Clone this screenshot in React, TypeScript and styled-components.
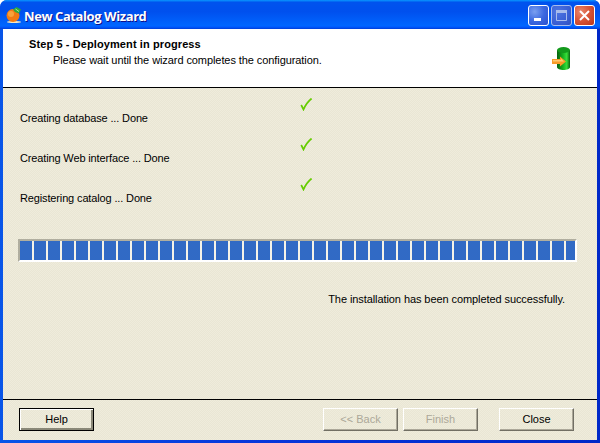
import React from "react";
import styled, { createGlobalStyle } from "styled-components";

const Global = createGlobalStyle`
  html, body { margin: 0; padding: 0; background: #fff; }
  #root { width: 600px; height: 443px; overflow: hidden; }
`;

const Frame = styled.div`
  width: 600px;
  height: 443px;
  box-sizing: border-box;
  display: flex;
  flex-direction: column;
  background: linear-gradient(90deg, #0855e8 0%, #0838dc 40%, #0028c8 100%);
  border-radius: 7px 7px 0 0;
  overflow: hidden;
  font-family: "Liberation Sans", Tahoma, sans-serif;
  font-size: 11px;
  letter-spacing: -0.08px;
  color: #000;
`;

const TitleBar = styled.div`
  height: 29px;
  flex: none;
  display: flex;
  align-items: center;
  padding: 0 5px 0 6px;
  gap: 2px;
  background: linear-gradient(180deg, #0997ff 0%, #0053ee 8%, #0050ee 40%, #0066ff 88%, #005bff 93%, #003dd7 100%);
`;

const Title = styled.div`
  flex: 1;
  margin-top: 3px;
  font-family: "Open Sans", "DejaVu Sans", sans-serif;
  font-weight: 700;
  font-size: 13px;
  letter-spacing: -0.42px;
  color: #fff;
  text-shadow: 1px 1px 0 #0f1089;
  white-space: nowrap;
`;

const WinControls = styled.div`
  display: flex;
  gap: 2px;
  margin-top: 1px;
`;

const WinButton = styled.div<{ $kind: "min" | "max" | "close" }>`
  width: 21px;
  height: 21px;
  box-sizing: border-box;
  border: 1px solid ${(p) => (p.$kind === "max" ? "#a9bcec" : "#fff")};
  border-radius: 3px;
  display: flex;
  align-items: center;
  justify-content: center;
  background: ${(p) =>
    p.$kind === "close"
      ? "radial-gradient(circle at 30% 30%, #e9886c 0%, #d9573a 45%, #b9351a 100%)"
      : p.$kind === "max"
      ? "radial-gradient(circle at 30% 30%, #4f75e2 0%, #3a5fd4 60%, #2f4fbf 100%)"
      : "radial-gradient(circle at 30% 30%, #7a9ff0 0%, #3c69e0 50%, #2a50cf 100%)"};
`;

const Client = styled.div`
  flex: 1;
  min-height: 0;
  margin: 0 3px 3px;
  display: flex;
  flex-direction: column;
  background-color: #ece9d8;
  background-image: conic-gradient(#e9e6d4 25%, #efecdc 0 50%, #e9e6d4 0 75%, #efecdc 0);
  background-size: 2px 2px;
`;

const Header = styled.header`
  height: 58px;
  flex: none;
  box-sizing: border-box;
  background: #fff;
  display: flex;
  justify-content: space-between;
  padding: 8px 27px 0 26px;
`;

const Rule = styled.div`
  height: 1px;
  flex: none;
  background: #000;
`;

const HeadTitle = styled.div`
  font-weight: 700;
  line-height: 14px;
  letter-spacing: 0.1px;
`;

const HeadSub = styled.div`
  line-height: 14px;
  margin-top: 2px;
  margin-left: 24px;
`;

const HeadIcon = styled.div`
  margin-top: 10px;
  width: 18px;
  height: 23px;
`;

const Body = styled.main`
  flex: 1;
  min-height: 0;
  box-sizing: border-box;
  padding: 10px 20px 0 15px;
  display: flex;
  flex-direction: column;
`;

const Steps = styled.div`
  display: flex;
  flex-direction: column;
`;

const StepRow = styled.div`
  height: 40px;
  display: grid;
  grid-template-columns: 282px 13px;
  align-items: start;
`;

const StepText = styled.div`
  margin: 12px 0 0 2px;
  line-height: 16px;
  white-space: nowrap;
  letter-spacing: -0.14px;
`;

const Progress = styled.div`
  margin-top: 21px;
  height: 23px;
  flex: none;
  box-sizing: border-box;
  border: 2px solid #fff;
  border-top-color: #b0ae9f;
  border-left-color: #b0ae9f;
  background: #f5f3e8;
  display: flex;
  gap: 2px;
  overflow: hidden;
`;

const Segment = styled.div`
  flex: none;
  width: 12px;
  height: 100%;
  background: #316ac5;
`;

const Success = styled.div`
  margin-top: 30px;
  text-align: right;
  padding-right: 12px;
  line-height: 14px;
`;

const Footer = styled.footer`
  flex: none;
  height: 40px;
  box-sizing: border-box;
  display: flex;
  align-items: flex-start;
  padding: 8px 23px 0 16px;
`;

const Button = styled.button<{ $primary?: boolean; $gap?: number }>`
  width: 75px;
  height: 23px;
  margin-left: ${(p) => p.$gap ?? 0}px;
  padding: 0 0 2px;
  box-sizing: border-box;
  font: 11px "Liberation Sans", Tahoma, sans-serif;
  color: #000;
  background: transparent;
  border: 1px solid;
  border-color: #fff #716f64 #716f64 #fff;
  box-shadow: inset -1px -1px 0 #aca899;
  &:disabled { color: #aca899; }
  ${(p) =>
    p.$primary
      ? `border-color: #000; box-shadow: inset 1px 1px 0 #fff, inset -2px -2px 0 #8a8878;`
      : ""}
`;

const Spacer = styled.div`
  flex: 1;
`;

const Orange = () => (
  <svg width="16" height="16" viewBox="0 0 16 16">
    <ellipse cx="8" cy="15" rx="7" ry="1" fill="#f8e8c0" />
    <circle cx="7" cy="8.5" r="6.5" fill="#f27a12" />
    <circle cx="5" cy="7" r="3" fill="#f9a23a" />
    <path d="M7 2.5 L10.5 0 L15 2.5 L13 6.5 L9 5 Z" fill="#2fa83a" />
    <path d="M9.5 2 L13 4.5" stroke="#a8e8a0" strokeWidth="1" />
  </svg>
);

const Db = () => (
  <svg width="18" height="23" viewBox="0 0 18 23" style={{ display: "block" }}>
    <defs>
      <linearGradient id="cyl" x1="0" x2="1" y1="0" y2="0">
        <stop offset="0" stopColor="#07610f" />
        <stop offset="0.45" stopColor="#16b020" />
        <stop offset="0.75" stopColor="#38de3a" />
        <stop offset="1" stopColor="#07610f" />
      </linearGradient>
    </defs>
    <path d="M5 3 V20 C5 24 18 24 18 20 V3 Z" fill="url(#cyl)" />
    <ellipse cx="11.5" cy="3" rx="6.5" ry="3" fill="#139a1c" />
    <path d="M0 12 H8 V9.5 L14 14.5 L8 19.5 V17 H0 Z" fill="#f79a28" />
    <path d="M1 13 H9 V11.5 L12 14.5 H1 Z" fill="#ffc870" />
  </svg>
);

const Check = () => (
  <svg width="13" height="13" viewBox="0 0 13 13" style={{ display: "block" }}>
    <path d="M1.2 7 L3.5 11.5 C5 8 7.8 3.5 11.6 0.5" fill="none" stroke="#66cc00" strokeWidth="1.7" />
  </svg>
);

const steps = ["Creating database ... Done", "Creating Web interface ... Done", "Registering catalog ... Done"];

export default function App() {
  return (
    <>
      <Global />
      <Frame>
        <TitleBar>
          <Orange />
          <Title>New Catalog Wizard</Title>
          <WinControls>
            <WinButton $kind="min">
              <svg width="13" height="13" viewBox="0 0 13 13"><rect x="2" y="9" width="7" height="3" fill="#fff" /></svg>
            </WinButton>
            <WinButton $kind="max">
              <svg width="13" height="13" viewBox="0 0 13 13"><path d="M1.5 3.5 H11.5 V11.5 H1.5 Z" fill="none" stroke="#a9bcec" /><rect x="1" y="1" width="11" height="3" fill="#a9bcec" /></svg>
            </WinButton>
            <WinButton $kind="close">
              <svg width="13" height="13" viewBox="0 0 13 13"><path d="M2 2 L11 11 M11 2 L2 11" stroke="#fff" strokeWidth="2" /></svg>
            </WinButton>
          </WinControls>
        </TitleBar>
        <Client>
          <Header>
            <div>
              <HeadTitle>Step 5 - Deployment in progress</HeadTitle>
              <HeadSub>Please wait until the wizard completes the configuration.</HeadSub>
            </div>
            <HeadIcon><Db /></HeadIcon>
          </Header>
          <Rule />
          <Body>
            <Steps>
              {steps.map((s) => (
                <StepRow key={s}>
                  <StepText>{s}</StepText>
                  <Check />
                </StepRow>
              ))}
            </Steps>
            <Progress>
              {Array.from({ length: 40 }, (_, i) => (
                <Segment key={i} />
              ))}
            </Progress>
            <Success>The installation has been completed successfully.</Success>
          </Body>
          <Rule />
          <Footer>
            <Button $primary>Help</Button>
            <Spacer />
            <Button disabled>&lt;&lt; Back</Button>
            <Button disabled $gap={5}>Finish</Button>
            <Button $gap={21}>Close</Button>
          </Footer>
        </Client>
      </Frame>
    </>
  );
}
